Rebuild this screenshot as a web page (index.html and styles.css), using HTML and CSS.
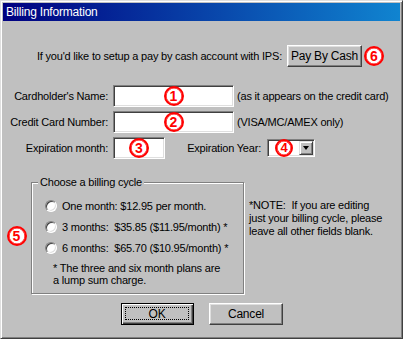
FILE: index.html
```html
<!DOCTYPE html>
<html>
<head>
<meta charset="utf-8">
<link rel="stylesheet" href="styles.css">
</head>
<body>
<div class="win">
  <div class="titlebar"><span class="title">Billing Information</span></div>
  <div class="content">
    <div class="row-cash">
      <span class="cash-text">If you'd like to setup a pay by cash account with IPS:</span>
      <span class="btn cash-btn">Pay By Cash</span>
      <span class="num num-6">6</span>
    </div>

    <div class="field-row first">
      <span class="label">Cardholder's Name:</span>
      <span class="input wide"><span class="num">1</span></span>
      <span class="hint">(as it appears on the credit card)</span>
    </div>
    <div class="field-row">
      <span class="label">Credit Card Number:</span>
      <span class="input wide"><span class="num">2</span></span>
      <span class="hint">(VISA/MC/AMEX only)</span>
    </div>
    <div class="field-row">
      <span class="label">Expiration month:</span>
      <span class="input short"><span class="num">3</span></span>
      <span class="label year-label">Expiration Year:</span>
      <span class="select">
        <span class="select-val"><span class="num">4</span></span>
        <span class="select-arrow"><span class="tri"></span></span>
      </span>
    </div>

    <div class="lower">
      <div class="num-col"><span class="num">5</span></div>
      <div class="group">
        <span class="legend">Choose a billing cycle</span>
        <div class="opt"><span class="radio"></span><span>One month: $12.95 per month.</span></div>
        <div class="opt"><span class="radio"></span><span>3 months:&nbsp; $35.85 ($11.95/month) *</span></div>
        <div class="opt"><span class="radio"></span><span>6 months:&nbsp; $65.70 ($10.95/month) *</span></div>
        <div class="group-note">* The three and six month plans are<br>a lump sum charge.</div>
      </div>
      <div class="note">*NOTE:&nbsp; If you are editing<br>just your billing cycle, please<br>leave all other fields blank.</div>
    </div>

    <div class="buttons">
      <span class="btn btn-default"><span class="focus">OK</span></span>
      <span class="btn btn-cancel">Cancel</span>
    </div>
  </div>
</div>
</body>
</html>
```

FILE: styles.css
```css
html, body {
  margin: 0;
  padding: 0;
  background: #c0c0c0;
}

.win {
  width: 403px;
  height: 339px;
  box-sizing: border-box;
  background: #c0c0c0;
  border: 1px solid;
  border-color: #dfdfdf #404040 #404040 #dfdfdf;
  box-shadow: inset 1px 1px 0 #ffffff, inset -1px -1px 0 #808080;
  padding: 2px;
  font-family: "Liberation Sans", Arial, sans-serif;
  font-size: 11px;
  letter-spacing: -0.2px;
  color: #000;
  display: flex;
  flex-direction: column;
}

.titlebar {
  height: 18px;
  background: linear-gradient(to right, #000080, #1084d0);
  display: flex;
  align-items: center;
}

.title {
  color: #fff;
  font-size: 12px;
  padding-left: 3px;
  line-height: 18px;
}

.content {
  display: flex;
  flex-direction: column;
}

/* Pay by cash row */
.row-cash {
  display: flex;
  align-items: center;
  height: 22px;
  margin-top: 24px;
}

.cash-text {
  width: 279px;
  text-align: right;
  white-space: nowrap;
}

.cash-btn {
  width: 75px;
  margin-left: 5px;
}

.num-6 {
  margin-left: 2px;
}

/* Buttons */
.btn {
  height: 22px;
  box-sizing: border-box;
  background: #c0c0c0;
  border: 1px solid;
  border-color: #ffffff #404040 #404040 #ffffff;
  box-shadow: inset -1px -1px 0 #808080, inset 1px 1px 0 #dfdfdf;
  display: flex;
  align-items: center;
  justify-content: center;
  white-space: nowrap;
  font-size: 12px;
}

.btn-default {
  width: 73px;
  border: 1px solid #000;
  box-shadow: inset 1px 1px 0 #ffffff, inset -1px -1px 0 #404040, inset -2px -2px 0 #808080;
  padding: 3px 4px 4px 3px;
}

.focus {
  flex: 1;
  align-self: stretch;
  border: 1px dotted #000;
  display: flex;
  align-items: center;
  justify-content: center;
}

.btn-cancel {
  width: 74px;
}

/* Circled numbers */
.num {
  width: 20px;
  height: 20px;
  box-sizing: border-box;
  border: 2px solid #ff0000;
  box-shadow: inset 0 0 0 0.6px #ff0000;
  border-radius: 50%;
  background: #fff;
  color: #ff0000;
  font-family: "Liberation Sans", Arial, sans-serif;
  font-weight: bold;
  font-size: 14px;
  letter-spacing: 0;
  line-height: 16px;
  text-align: center;
  display: inline-block;
  flex: none;
}

/* Field rows */
.field-row {
  display: flex;
  align-items: center;
  height: 22px;
  margin-top: 4px;
}

.field-row.first {
  margin-top: 18px;
}

.label {
  width: 105px;
  text-align: right;
  white-space: nowrap;
  flex: none;
}

.input {
  height: 22px;
  box-sizing: border-box;
  margin-left: 5px;
  background: #fff;
  border: 1px solid;
  border-color: #808080 #ffffff #ffffff #808080;
  box-shadow: inset 1px 1px 0 #404040, inset -1px -1px 0 #dfdfdf;
  display: flex;
  align-items: center;
  justify-content: center;
  flex: none;
}

.input.wide {
  width: 121px;
}

.input.short {
  width: 52px;
}

.hint {
  margin-left: 3px;
  white-space: nowrap;
}

.year-label {
  width: 96px;
}

.select {
  width: 48px;
  height: 18px;
  box-sizing: border-box;
  margin-left: 6px;
  background: #fff;
  border: 1px solid;
  border-color: #808080 #ffffff #ffffff #808080;
  box-shadow: inset 1px 1px 0 #404040, inset -1px -1px 0 #dfdfdf;
  padding: 1px;
  display: flex;
  flex: none;
}

.select-val {
  flex: 1;
  display: flex;
  align-items: center;
  justify-content: center;
}

.select-val .num {
  width: 18px;
  height: 18px;
  line-height: 14px;
  font-size: 13px;
  margin-top: -1px;
}

.select-arrow {
  width: 14px;
  box-sizing: border-box;
  background: #c0c0c0;
  border: 1px solid;
  border-color: #dfdfdf #404040 #404040 #dfdfdf;
  box-shadow: inset 1px 1px 0 #fff, inset -1px -1px 0 #808080;
  display: flex;
  align-items: center;
  justify-content: center;
}

.tri {
  width: 0;
  height: 0;
  border-left: 3.5px solid transparent;
  border-right: 3.5px solid transparent;
  border-top: 4px solid #000;
}

/* Lower section */
.lower {
  display: flex;
  margin-top: 23px;
}

.num-col {
  width: 28px;
  display: flex;
  align-items: center;
  justify-content: center;
  padding-bottom: 5px;
}

.num-col .num {
  margin-left: -1px;
}

.group {
  width: 213px;
  height: 112px;
  box-sizing: border-box;
  border: 1px solid #808080;
  box-shadow: 1px 1px 0 #ffffff, inset 1px 1px 0 #ffffff;
  display: flex;
  flex-direction: column;
  padding-left: 13px;
}

.legend {
  align-self: flex-start;
  margin-top: -8px;
  margin-left: -7px;
  padding: 0 2px;
  background: #c0c0c0;
  line-height: 15px;
  white-space: nowrap;
}

.opt {
  display: flex;
  align-items: center;
  height: 21px;
  white-space: nowrap;
}

.opt:first-of-type {
  margin-top: 5px;
}

.radio {
  width: 12px;
  height: 12px;
  box-sizing: border-box;
  border-radius: 50%;
  background: #fff;
  border: 1px solid;
  border-color: #808080 #ffffff #ffffff #808080;
  box-shadow: inset 1px 1px 0 #404040, inset -1px -1px 0 #dfdfdf;
  margin-right: 5px;
  flex: none;
}

.group-note {
  margin-top: 4px;
  padding-left: 8px;
  line-height: 12px;
  white-space: nowrap;
}

.note {
  margin-left: 5px;
  margin-top: 17px;
  line-height: 13px;
  white-space: nowrap;
}

/* OK / Cancel */
.buttons {
  display: flex;
  justify-content: center;
  gap: 15px;
  margin-top: 9px;
  padding-left: 1px;
}
```
